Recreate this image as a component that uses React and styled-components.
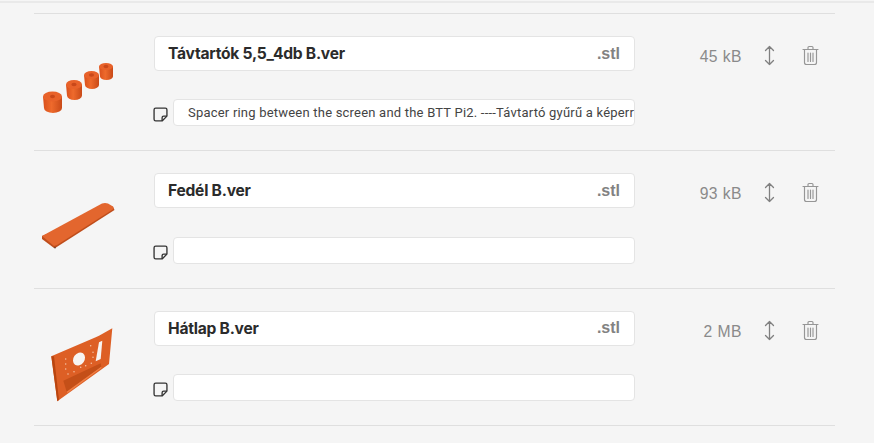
import React from "react";
import styled, { createGlobalStyle } from "styled-components";

const Global = createGlobalStyle`
  html, body { margin: 0; padding: 0; background: #f5f5f5; }
  body { font-family: "Roboto", "Liberation Sans", sans-serif; width: 874px; height: 443px; overflow: hidden; }
`;
const Page = styled.div`
  border-top: 2px solid #e9e9e9;
  margin-top: 1px;
  padding: 10px 39px 0 34px;
`;
const List = styled.div`
  border-top: 1px solid #dfdfdf;
`;
const Row = styled.div`
  height: 136.33px;
  border-bottom: 1px solid #dfdfdf;
  display: grid;
  grid-template-columns: 120px 481px 1fr;
  box-sizing: content-box;
`;
const Thumb = styled.div`
  display: flex;
  align-items: center;
  justify-content: flex-start;
  box-sizing: border-box;
  padding-top: ${p => p.$top}px;
  padding-left: ${p => p.$left}px;
`;
const ThumbArt = styled.svg`
  flex: none;
  filter: blur(0.4px);
`;
const Fields = styled.div`
  padding-top: 22px;
  display: flex;
  flex-direction: column;
  gap: 28.4px;
`;
const NameBox = styled.div`
  height: 35px;
  box-sizing: border-box;
  background: #fff;
  border: 1px solid #e4e4e4;
  border-radius: 4px;
  display: flex;
  align-items: center;
  justify-content: space-between;
  padding: 0 14px 0 13px;
  font-family: "Inter", sans-serif;
  font-weight: 700;
  font-size: 15.6px;
  letter-spacing: -0.24px;
  color: #2b2b2b;
`;
const Ext = styled.span`
  color: #828282;
  font-family: "Liberation Sans", sans-serif;
  font-size: 16px;
  letter-spacing: 0;
`;
const NoteRow = styled.div`
  display: flex;
  align-items: center;
  gap: 5px;
`;
const NoteBox = styled.div`
  flex: 1;
  height: 27px;
  box-sizing: border-box;
  background: #fff;
  border: 1px solid #e4e4e4;
  border-radius: 4px;
  padding: 0 0 0 14px;
  display: flex;
  align-items: center;
  font-size: 13px;
  letter-spacing: 0.21px;
  color: #444;
  white-space: nowrap;
`;
const NoteIcon = styled.svg`
  width: 15px;
  height: 15px;
  margin-left: -1px;
  margin-top: 4px;
  flex: none;
`;
const Meta = styled.div`
  display: flex;
  align-items: flex-start;
  padding-top: 31px;
`;
const Size = styled.div`
  width: 107px;
  margin-top: 1px;
  text-align: right;
  font-family: "Liberation Sans", sans-serif;
  font-size: 15.7px;
  letter-spacing: 0.45px;
  color: #8a8a8a;
  line-height: 22px;
`;
const Actions = styled.div`
  display: flex;
  margin-left: 18px;
  gap: 22px;
`;
const ActionIcon = styled.svg`
  width: 19px;
  height: 21px;
  flex: none;
`;

const Note = () => (
  <NoteIcon viewBox="0 0 14 14" fill="none" stroke="#333" strokeWidth="1.25" strokeLinejoin="round">
    <path d="M2.5 1h9a1.5 1.5 0 0 1 1.5 1.5V8.5L8.5 13h-6A1.5 1.5 0 0 1 1 11.5v-9A1.5 1.5 0 0 1 2.5 1z" />
    <path d="M13 8.5H10A1.5 1.5 0 0 0 8.5 10v3" />
  </NoteIcon>
);
const Move = () => (
  <ActionIcon viewBox="0 0 19 21" fill="none" stroke="#808080" strokeWidth="1.3" strokeLinecap="round" strokeLinejoin="round">
    <path d="M9.5 1.5v18M5.5 5.5l4-4 4 4M5.5 15.5l4 4 4-4" />
  </ActionIcon>
);
const Trash = () => (
  <ActionIcon viewBox="0 0 19 21" fill="none" stroke="#969696" strokeWidth="1.15" strokeLinecap="round" strokeLinejoin="round">
    <path d="M2 4.5h15M7 4.5V2.5a1 1 0 0 1 1-1h3a1 1 0 0 1 1 1v2M3.5 4.5v13a2 2 0 0 0 2 2h8a2 2 0 0 0 2-2v-13M7 8v8.5M9.5 8v8.5M12 8v8.5" />
  </ActionIcon>
);

const Spacers = () => (
  <ThumbArt width="74" height="54" viewBox="0 0 74 54">
    <defs>
      <linearGradient id="cyl" x1="0" x2="1" y1="0" y2="0">
        <stop offset="0" stopColor="#d9501c" />
        <stop offset="0.45" stopColor="#ee6a2c" />
        <stop offset="1" stopColor="#c94a18" />
      </linearGradient>
    </defs>
    {[
      [10.5, 35.5, 9.5, 5, 11.5, 2.5],
      [32, 23.5, 8, 4.5, 11, 2.6],
      [49.5, 14, 7.5, 4, 10, 2.6],
      [64, 5.5, 7, 3.5, 10, 2.4],
    ].map(([cx, cy, rx, ry, h, r], i) => (
      <g key={i}>
        <path d={`M${cx - rx} ${cy}l1 ${h}a${rx - 0.5} ${ry} 0 0 0 ${rx * 2 - 1} 0l0 ${-h}z`} fill="url(#cyl)" />
        <ellipse cx={cx} cy={cy} rx={rx} ry={ry} fill="#e8622a" />
        <ellipse cx={cx} cy={cy} rx={r} ry={r * 0.7} fill="#c9481a" />
      </g>
    ))}
  </ThumbArt>
);
const Lid = () => (
  <ThumbArt width="78" height="50" viewBox="0 0 78 50">
    <path d="M2 36 L2 39 L14 48 L16 47.5 L74.5 10 L73 6.5 Z" fill="#bf4d1b" />
    <path d="M2 36 L62 3.5 Q65 2.5 68 3.5 L73 6.5 L73.5 9 L17 45 L14 46 Z" fill="#e3662e" />
    <circle cx="15" cy="47.6" r="0.9" fill="#6b4030" />
  </ThumbArt>
);
const Plate = () => (
  <ThumbArt width="68" height="88" viewBox="0 0 68 88">
    <path d="M3.3 30.3 L47.7 11.3 L51 9.7 L64.3 2.3 L61 38 L9.3 75.3 Z" fill="#dd5f25" />
    <path d="M3.3 30.3 L6 30.3 L11 74 L9.3 75.3 Z" fill="#b9450f" />
    <ellipse cx="31" cy="33" rx="5.5" ry="7" transform="rotate(35 31 33)" fill="#f7f4f2" />
    <path d="M51 16.3 L54.3 14.7 L52.7 33 L47.7 35.3 Z" fill="#f7f4f2" />
    <path d="M15.3 54.7 L52.7 37.3 L53.3 40.7 L18.7 65.7 Z" fill="#c44f18" />
    <path d="M18.7 65.7 L53.3 40.7 L53.5 42 L19.5 67 Z" fill="#ef7f45" />
    {[[17.7,33],[17.7,38],[17.7,43],[20,48],[26,45.7],[32.7,41.3],[37.7,39.7],[43.3,37.3],[45,31.3],[45,26.3],[42.7,19.7]].map(([x, y], i) => (
      <circle key={i} cx={x} cy={y} r="0.75" fill="#f6c3a6" />
    ))}
  </ThumbArt>
);

const rows = [
  { name: "Távtartók 5,5_4db B.ver", size: "45 kB", note: "Spacer ring between the screen and the BTT Pi2. ----Távtartó gyűrű a képerr", art: <Spacers />, top: 12, left: 8 },
  { name: "Fedél B.ver", size: "93 kB", note: "", art: <Lid />, top: 11, left: 6 },
  { name: "Hátlap B.ver", size: "2 MB", note: "", art: <Plate />, top: 27, left: 14 },
];

export default function App() {
  return (
    <>
      <Global />
      <Page>
        <List>
          {rows.map(r => (
            <Row key={r.name}>
              <Thumb $top={r.top} $left={r.left}>{r.art}</Thumb>
              <Fields>
                <NameBox>{r.name}<Ext>.stl</Ext></NameBox>
                <NoteRow><Note /><NoteBox>{r.note}</NoteBox></NoteRow>
              </Fields>
              <Meta>
                <Size>{r.size}</Size>
                <Actions><Move /><Trash /></Actions>
              </Meta>
            </Row>
          ))}
        </List>
      </Page>
    </>
  );
}
